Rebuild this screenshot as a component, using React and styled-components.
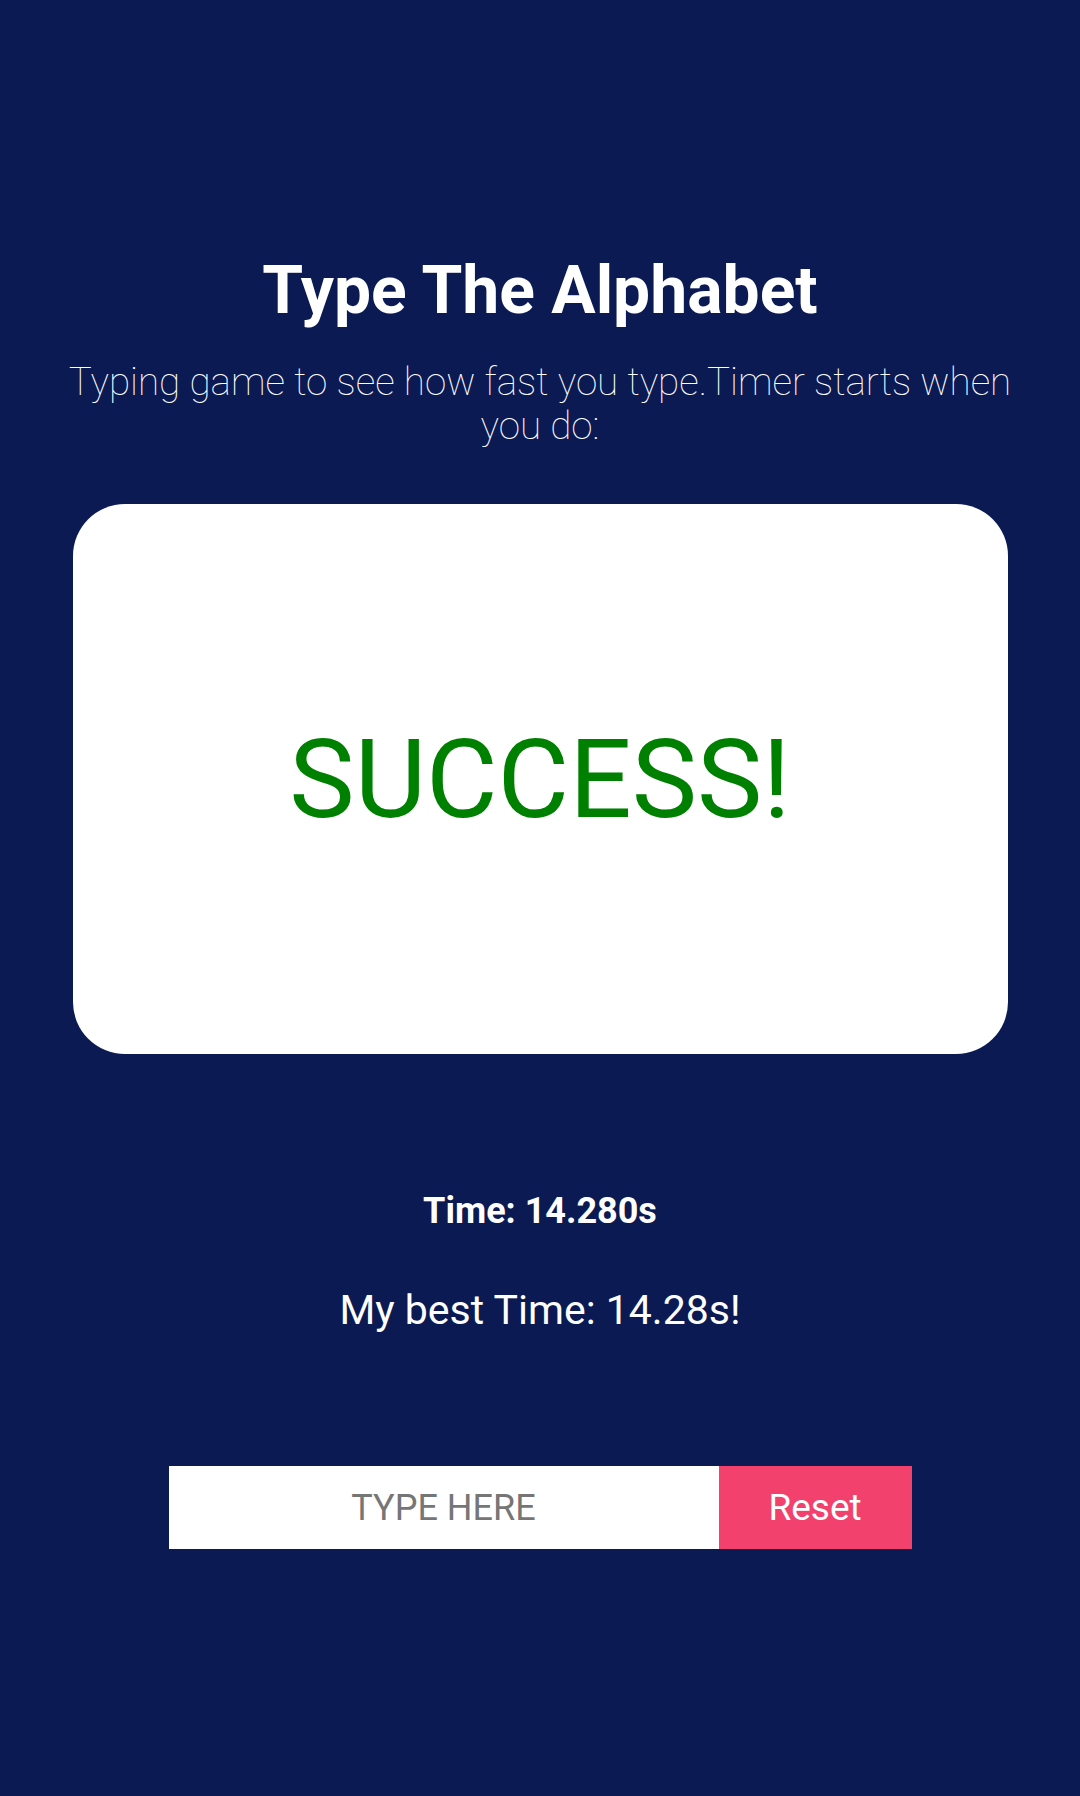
import React from "react";
import styled, { createGlobalStyle } from "styled-components";

const GlobalStyle = createGlobalStyle`
  html, body {
    margin: 0;
    padding: 0;
    background: #0b1a53;
  }
  body {
    font-family: Roboto, "Liberation Sans", sans-serif;
    color: #fff;
  }
`;

const Page = styled.div`
  min-height: 1796px;
  background: #0b1a53;
  display: flex;
  flex-direction: column;
  align-items: center;
  padding-top: 251px;
  box-sizing: border-box;
`;

const Title = styled.h1`
  margin: 0;
  font-size: 66px;
  font-weight: 700;
  line-height: 80px;
  text-align: center;
`;

const Subtitle = styled.p`
  margin: 29px 0 0;
  width: 960px;
  font-size: 38.6px;
  font-weight: 100;
  line-height: 44px;
  text-align: center;
`;

const Card = styled.div`
  margin-top: 56px;
  width: 935px;
  height: 550px;
  background: #fff;
  border-radius: 52px;
  display: flex;
  align-items: center;
  justify-content: center;
`;

const Status = styled.span`
  font-size: 110px;
  font-weight: 400;
  color: ${(p) => p.color};
`;

const TimeLine = styled.div`
  margin-top: ${(p) => p.gap}px;
  font-size: ${(p) => p.size}px;
  font-weight: ${(p) => (p.bold ? 700 : 400)};
  text-align: center;
`;

const Controls = styled.div`
  margin-top: 132px;
  display: flex;
  height: 83px;
`;

const TypeInput = styled.input`
  width: 550px;
  height: 83px;
  box-sizing: border-box;
  border: none;
  outline: none;
  margin: 0;
  padding: 0 10px;
  background: #fff;
  font-family: Roboto, "Liberation Sans", sans-serif;
  font-size: 36px;
  text-align: center;
  color: #333;
  &::placeholder {
    color: #767676;
  }
`;

const ResetButton = styled.button`
  width: 193px;
  height: 83px;
  border: none;
  margin: 0;
  background: #f2416d;
  color: #fff;
  font-family: Roboto, "Liberation Sans", sans-serif;
  font-size: 37px;
  cursor: pointer;
`;

export default function App() {
  return (
    <>
      <GlobalStyle />
      <Page>
        <Title>Type The Alphabet</Title>
        <Subtitle>
          Typing game to see how fast you type.Timer starts when you do:
        </Subtitle>
        <Card>
          <Status color="#008000">SUCCESS!</Status>
        </Card>
        <TimeLine gap={136} size={36} bold>
          Time: 14.280s
        </TimeLine>
        <TimeLine gap={54} size={41}>
          My best Time: 14.28s!
        </TimeLine>
        <Controls>
          <TypeInput placeholder="TYPE HERE" />
          <ResetButton>Reset</ResetButton>
        </Controls>
      </Page>
    </>
  );
}
